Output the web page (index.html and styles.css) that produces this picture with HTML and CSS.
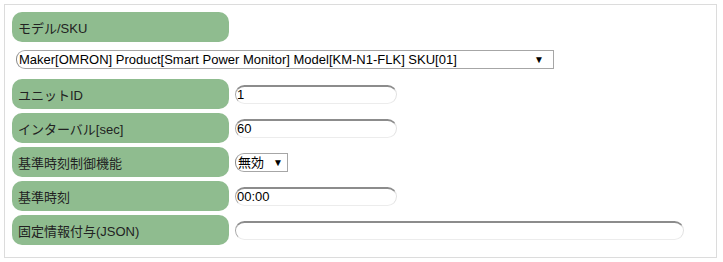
FILE: index.html
```html
<!DOCTYPE html>
<html lang="ja">
<head>
<meta charset="utf-8">
<title>設定</title>
<link rel="stylesheet" href="styles.css">
</head>
<body>
<div class="panel">
  <div class="row">
    <div class="label">モデル/SKU</div>
  </div>
  <div class="model-row">
    <div class="select-wrap wide">
      <select class="sel">
        <option>Maker[OMRON] Product[Smart Power Monitor] Model[KM-N1-FLK] SKU[01]</option>
      </select>
      <span class="arrow">▼</span>
    </div>
  </div>
  <div class="rows">
    <div class="row">
      <div class="label">ユニットID</div>
      <input class="field" type="text" value="1">
    </div>
    <div class="row">
      <div class="label">インターバル[sec]</div>
      <input class="field" type="text" value="60">
    </div>
    <div class="row">
      <div class="label">基準時刻制御機能</div>
      <div class="select-wrap small">
        <select class="sel">
          <option>無効</option>
        </select>
        <span class="arrow">▼</span>
      </div>
    </div>
    <div class="row">
      <div class="label">基準時刻</div>
      <input class="field" type="text" value="00:00">
    </div>
    <div class="row">
      <div class="label">固定情報付与(JSON)</div>
      <input class="field json" type="text" value="">
    </div>
  </div>
</div>
</body>
</html>
```

FILE: styles.css
```css
html, body {
  margin: 0;
  padding: 0;
  background: #ffffff;
}
body {
  padding: 4px;
  font-family: "Liberation Sans", Arial, "Noto Sans CJK JP", sans-serif;
  font-size: 13px;
  color: #222222;
}
.panel {
  box-sizing: border-box;
  width: 713px;
  height: 254px;
  border: 1px solid #dcdcdc;
  padding: 7px;
}
.rows {
  display: flex;
  flex-direction: column;
  gap: 4px;
}
.row {
  display: flex;
  align-items: center;
  gap: 6px;
  height: 30px;
}
.label {
  box-sizing: border-box;
  width: 217px;
  height: 30px;
  flex: none;
  background: #8fbc8f;
  border-radius: 10px;
  padding-left: 6px;
  display: flex;
  align-items: center;
  color: #222222;
  font-size: 13px;
}
.model-row {
  padding: 8px 0 10px 4px;
}
.select-wrap {
  position: relative;
  display: inline-block;
}
.sel {
  -webkit-appearance: none;
  appearance: none;
  box-sizing: border-box;
  height: 19px;
  margin: 0;
  padding: 0 0 0 2px;
  border: 1px solid #a6a6a6;
  border-left-color: #8a8a8a;
  border-radius: 9px 0 0 9px;
  background: #ffffff;
  font-family: "Liberation Sans", Arial, "Noto Sans CJK JP", sans-serif;
  font-size: 13px;
  color: #000000;
  line-height: 17px;
  outline: none;
}
.wide .sel {
  width: 538px;
}
.small .sel {
  width: 53px;
  height: 19px;
}
.arrow {
  position: absolute;
  top: 4px;
  font-size: 10px;
  line-height: 11px;
  color: #000000;
  pointer-events: none;
}
.wide .arrow {
  right: 10px;
}
.small .arrow {
  right: 5px;
}
.field {
  box-sizing: border-box;
  width: 162px;
  height: 19px;
  margin: 0;
  padding: 0 0 0 1px;
  border-style: solid;
  border-width: 2px 1px 1px 1px;
  border-top-color: #8c8c8c;
  border-left-color: #a8a8a8;
  border-right-color: #e2e2e2;
  border-bottom-color: #ececec;
  border-radius: 10px;
  background: #ffffff;
  font-family: "Liberation Sans", Arial, sans-serif;
  font-size: 13px;
  color: #000000;
  outline: none;
}
.field.json {
  width: 449px;
}
```
